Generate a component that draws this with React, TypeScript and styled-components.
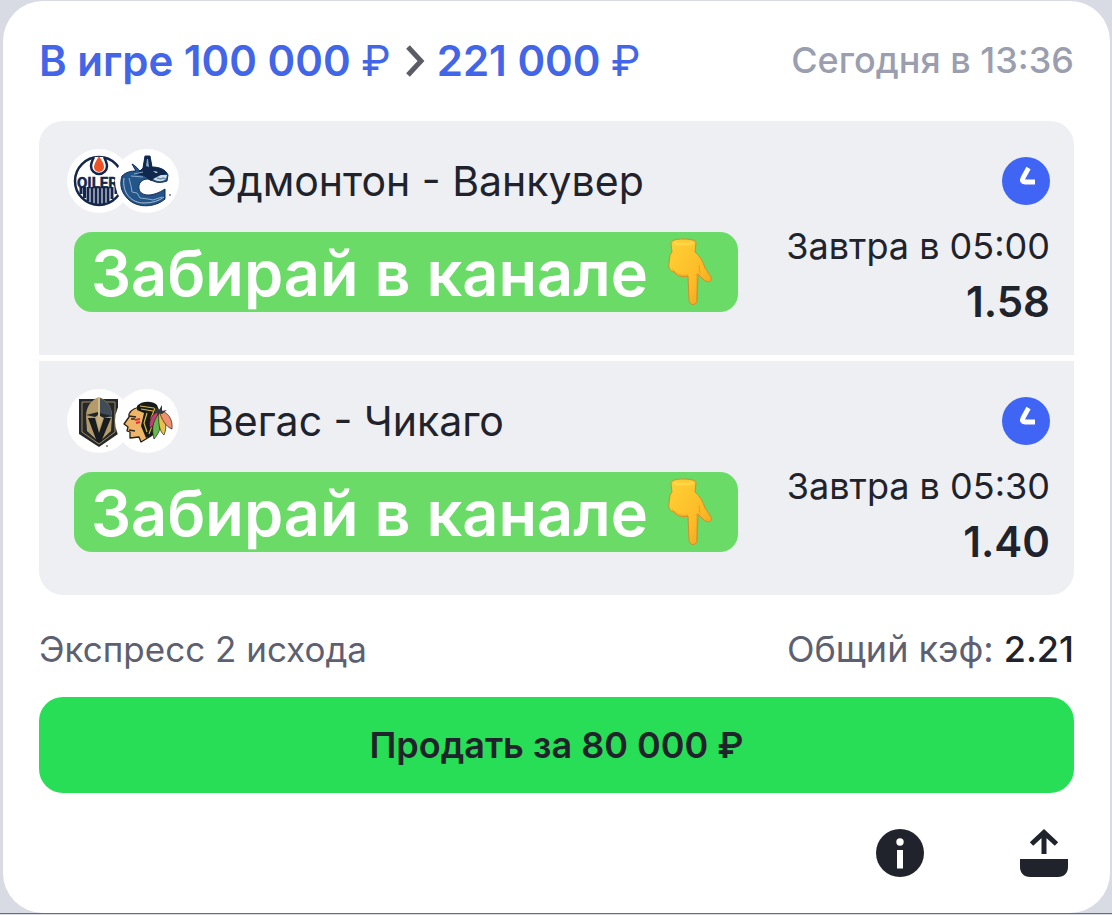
import styled, { createGlobalStyle } from "styled-components";

const GlobalStyle = createGlobalStyle`
  * {
    box-sizing: border-box;
  }

  body {
    margin: 0;
    background: #d8dae4;
    font-family: Inter, "Liberation Sans", sans-serif;
    color: #20232c;
  }

  button {
    font-family: inherit;
    border: none;
    padding: 0;
    cursor: pointer;
  }
`;

const Page = styled.div`
  padding: 1px 2px 0 3px;
  border-bottom: 1px solid #6c6d73;
`;

const Card = styled.main`
  padding: 36px;
  background: #ffffff;
  border-radius: 40px;
`;

const Header = styled.header`
  display: flex;
  justify-content: space-between;
  align-items: center;
  height: 48px;
  margin-bottom: 36px;
`;

const Stake = styled.h1`
  display: flex;
  align-items: center;
  margin: 0;
  font-size: 42px;
  font-weight: 600;
  line-height: 48px;
  color: #4365e8;
`;

const Currency = styled.span`
  font-weight: 400;
`;

const Arrow = styled.svg`
  width: 20px;
  height: 32px;
  margin: 0 12px 0 14px;
`;

const Placed = styled.time`
  font-size: 36px;
  line-height: 44px;
  padding-bottom: 2px;
  font-weight: 500;
  color: #9a9eae;
`;

const Events = styled.section`
  display: flex;
  flex-direction: column;
  gap: 6px;
  overflow: hidden;
  border-radius: 24px;
`;

const Event = styled.article`
  padding: 27px 24px 25px 27px;
  background: #eeeff3;
`;

const EventTop = styled.div`
  display: flex;
  align-items: center;
  height: 66px;
`;

const Logos = styled.div`
  display: flex;
  margin-right: 27px;
`;

const Logo = styled.svg`
  display: block;
  width: 66px;
  height: 66px;

  & + & {
    margin-left: -18px;
  }
`;

const Teams = styled.h2`
  flex: 1;
  margin: 0;
  font-size: 41px;
  font-weight: 400;
  line-height: 48px;
`;

const Clock = styled.svg`
  width: 48px;
  height: 48px;
`;

const EventBody = styled.div`
  display: flex;
  justify-content: space-between;
  align-items: flex-start;
  padding-top: 4px;
`;

const Promo = styled.div`
  display: flex;
  align-items: center;
  gap: 20px;
  height: 80px;
  margin: 14px 0 0 8px;
  padding: 2px 24px 0 17px;
  border-radius: 18px;
  background: #6adb67;
  font-size: 63px;
  font-weight: 600;
  line-height: 76px;
  color: #ffffff;
  white-space: nowrap;
`;

const Hand = styled.svg`
  width: 46px;
  height: 70px;
`;

const Result = styled.div`
  display: flex;
  flex-direction: column;
  align-items: flex-end;
  line-height: 56px;
  white-space: nowrap;
`;

const Start = styled.time`
  font-size: 36px;
`;

const Odds = styled.strong`
  font-size: 42px;
  font-weight: 600;
`;

const Summary = styled.div`
  display: flex;
  justify-content: space-between;
  margin: 30px 0 24px;
  font-size: 36px;
  line-height: 48px;
  color: #5d6070;
`;

const BetType = styled.span`
  font-size: 35px;
`;

const Total = styled.strong`
  font-weight: 500;
  color: #20232c;
`;

const SellButton = styled.button`
  display: block;
  width: 100%;
  height: 96px;
  border-radius: 24px;
  background: #29de57;
  font-size: 36px;
  font-weight: 600;
  color: #20232c;
`;

const Actions = styled.footer`
  display: flex;
  justify-content: flex-end;
  gap: 96px;
  margin-top: 36px;
  padding-right: 6px;
`;

const IconButton = styled.button`
  width: 48px;
  height: 48px;
  background: none;

  svg {
    display: block;
  }
`;

function OilersLogo() {
  return (
    <Logo viewBox="0 0 66 66">
      <circle cx="33" cy="33" r="32" fill="#fff" />
      <circle cx="33" cy="33" r="24" fill="#fff" stroke="#14264b" strokeWidth="2.5" />
      <path
        d="M15 39v7M18.500 39v11M22 39v14M26 39v17M30 39v18M34 39v18M38 39v17M42 39v15M46 39v12M50 39v7"
        stroke="#14264b"
        strokeWidth="3"
      />
      <text x="11" y="40" fontFamily="Roboto" fontWeight="700" fontSize="15" fill="#14264b" stroke="#14264b" strokeWidth=".5">
        OILER
      </text>
      <path
        d="M28 9c-2 4-3 6-3 9a8 8 0 0 0 16 0c0-3-1-5-3-9"
        fill="#fff"
        stroke="#14264b"
        strokeWidth="2.500"
      />
      <path d="M33 8c-3 5-5 8-5 11a5 5 0 0 0 10 0c0-3-2-6-5-11Z" fill="#f05223" />
    </Logo>
  );
}

function CanucksLogo() {
  return (
    <Logo viewBox="0 0 66 66">
      <circle cx="33" cy="33" r="32" fill="#fff" />
      <path
        d="M8 28c4-4 9-5 14-5l-4-7c4 2 6 5 8 7l3-3 2-12h5l2 11c8 0 14 3 16 8l-1 6c-3 1-7 2-11 1l-8-3c-6 0-10 4-9 10 2 8 14 8 26 0v10c-9 8-27 10-37 0-6-6-9-13-6-23Z"
        fill="#24558a"
        stroke="#112b55"
        strokeWidth="1"
        strokeLinejoin="round"
      />
      <path d="M10 30c-2 16 8 25 20 25 8 0 15-2 20-6" fill="none" stroke="#a7c0d4" strokeWidth="1" />
      <path d="m15 30 2 8 1 6 5 1 3 5 8 1 5 1 9-3" fill="none" stroke="#8babc8" strokeWidth="1" />
      <path d="m29 20 2-12h5l2 11c7 0 13 2 15 7l-9 2-7 5-7-5-8-2Z" fill="#10284e" />
      <path d="m32 18 1-7h1l1 8Z" fill="#8babc8" />
      <path d="m39 31 8-4 6 0-1 4c-4 3-8 3-13 0Z" fill="#d3dde4" />
      <path d="m43 30 4 1 2-1 3 1" fill="none" stroke="#6f93b4" strokeWidth="1.500" />
      <path d="m39 23 5 1-2 1Z" fill="#fff" />
      <path d="m20 26 9-2M17 28l12 1" stroke="#8babc8" strokeWidth="1" />
      <circle cx="56" cy="47" r="1" fill="#6e7686" />
    </Logo>
  );
}

function KnightsLogo() {
  return (
    <Logo viewBox="0 0 66 66">
      <circle cx="33" cy="33" r="32" fill="#fff" />
      <path d="M13 11h39v35L33 59 13 46Z" fill="#24282b" />
      <path d="M16 14h33v30L33 56 16 44Z" fill="none" stroke="#a58b5d" strokeWidth="1" />
      <path d="M33 9c-8 3-13 10-13 19l1 15 12 11 12-11 1-15c0-9-5-16-13-19Z" fill="#b49b6b" />
      <path d="M34 10v16l12 3c0-9-4-16-12-19Z" fill="#414c57" />
      <path d="M20 27 32 24v3l-3 2ZM46 28l-12-3v3l4 2Z" fill="#20262a" />
      <path d="M22 30h7l4 15 5-15h7L35 54h-4Z" fill="#181c1f" />
      <path d="m30 30 3 11 4-11-4-2Z" fill="#c7b07e" />
      <path d="M33 9v20" stroke="#decb9f" strokeWidth="1.300" />
      <circle cx="41" cy="58" r="1" fill="#77716a" />
    </Logo>
  );
}

function BlackhawksLogo() {
  return (
    <Logo viewBox="0 0 66 66">
      <circle cx="33" cy="33" r="32" fill="#fff" />
      <path
        d="M25 19c-7 2-11 5-10 10l-5 7 4 3-1 4 3 1v6l9-1 2 5 10-6-4-15 3-12Z"
        fill="#efb568"
        stroke="#252119"
        strokeWidth="1.300"
        strokeLinejoin="round"
      />
      <path d="M23 18c4-5 15-6 20-1l4 10-5 4-2 16-8 3-5-12 3-13-7-3Z" fill="#171b18" />
      <path d="m26 18 14 2M27 21l12 2M41 20l-4 10 1 8-3 8M33 25l-3 10 3 9" fill="none" stroke="#d8b647" strokeWidth="1.200" />
      <path d="m15 28 7 1M17 31h4M15 42l6 1" stroke="#33251b" strokeWidth="1.400" />
      <path d="m21 32 5-1M22 35l4-1" stroke="#df2e38" strokeWidth="2" />
      <path d="M44 24c-6 1-10 10-8 16 6-4 8-8 8-16Z" fill="#c53c73" stroke="#282018" strokeWidth=".7" />
      <path d="M45 25c-6 9-8 15-5 26 7-8 8-15 5-26Z" fill="#65b950" stroke="#282018" strokeWidth=".7" />
      <path d="M45 23c-1 11 0 20 5 24 4-9 1-19-5-24Z" fill="#e8c24d" stroke="#282018" strokeWidth=".7" />
      <path d="M45 22c2 9 7 17 13 19 1-10-4-17-13-19Z" fill="#ef9170" stroke="#282018" strokeWidth=".7" />
      <path d="m41 19 4 3 3-5v6l5-1-5 4-7-1Z" fill="#30383a" />
    </Logo>
  );
}

function PointingDown() {
  return (
    <Hand viewBox="0 0 46 70" role="img" aria-label="👇">
      <defs>
        <linearGradient id="skin" x1="0" y1="0" x2="1" y2="1">
          <stop offset="0" stopColor="#ffd137" />
          <stop offset=".6" stopColor="#fdbc27" />
          <stop offset="1" stopColor="#ed9d21" />
        </linearGradient>
      </defs>
      <path
        d="M3 6c0-4 5-5 12-5s13 1 13 4l-1 9c5 4 8 10 10 16l6 9c2 5-3 6-7 3l-6-6-1 26c0 6-8 6-8 0l-1-24c-7 2-12-1-14-4C2 33 0 30 1 25l1-8 2-3Z"
        fill="url(#skin)"
        stroke="#d58e27"
        strokeWidth="1"
      />
      <path d="M29 35v27M31 27l1 9M4 31c5 6 11 7 16 6" fill="none" stroke="#d88624" strokeWidth="1" opacity=".5" />
      <path d="M6 5c6 2 15 1 20 0" fill="none" stroke="#ffe35e" strokeWidth="3" opacity=".5" />
    </Hand>
  );
}

const events = [
  {
    teams: "Эдмонтон - Ванкувер",
    start: "Завтра в 05:00",
    odds: "1.58",
    logos: [OilersLogo, CanucksLogo],
  },
  {
    teams: "Вегас - Чикаго",
    start: "Завтра в 05:30",
    odds: "1.40",
    logos: [KnightsLogo, BlackhawksLogo],
  },
];

function App() {
  return (
    <>
      <GlobalStyle />
      <Page>
        <Card>
          <Header>
            <Stake>
              <span>
                В игре 100 000 <Currency>₽</Currency>
              </span>
              <Arrow viewBox="0 0 20 32" fill="none" aria-hidden="true">
                <path d="m3 2 13 14L3 30" stroke="#5b5c66" strokeWidth="5" />
              </Arrow>
              <span>
                221 000 <Currency>₽</Currency>
              </span>
            </Stake>
            <Placed>Сегодня в 13:36</Placed>
          </Header>

          <Events>
            {events.map(({ teams, start, odds, logos: [Home, Away] }) => (
              <Event key={teams}>
                <EventTop>
                  <Logos>
                    <Home />
                    <Away />
                  </Logos>
                  <Teams>{teams}</Teams>
                  <Clock viewBox="0 0 48 48" fill="none" aria-hidden="true">
                    <circle cx="24" cy="24" r="24" fill="#4065f5" />
                    <path d="m26.500 11-5.500 10q-2 4 2 4h10" stroke="#fff" strokeWidth="4.800" />
                  </Clock>
                </EventTop>
                <EventBody>
                  <Promo>
                    Забирай в канале
                    <PointingDown />
                  </Promo>
                  <Result>
                    <Start>{start}</Start>
                    <Odds>{odds}</Odds>
                  </Result>
                </EventBody>
              </Event>
            ))}
          </Events>

          <Summary>
            <BetType>Экспресс 2 исхода</BetType>
            <span>
              Общий кэф: <Total>2.21</Total>
            </span>
          </Summary>

          <SellButton type="button">Продать за 80 000 ₽</SellButton>

          <Actions>
            <IconButton type="button" aria-label="Информация">
              <svg viewBox="0 0 48 48" width="48" height="48">
                <circle cx="24" cy="24" r="24" fill="#20232c" />
                <circle cx="24" cy="13" r="3.700" fill="#fff" />
                <path d="M21 21h6v18.500h-6z" fill="#fff" />
              </svg>
            </IconButton>
            <IconButton type="button" aria-label="Поделиться">
              <svg viewBox="0 0 48 48" width="48" height="48" fill="none">
                <path d="M24 25V3M11.500 15 24 3.500 36.500 15" stroke="#20232c" strokeWidth="5" />
                <path d="M0 30h48v8c0 6-4 10-10 10H10C4 48 0 44 0 38Z" fill="#20232c" />
              </svg>
            </IconButton>
          </Actions>
        </Card>
      </Page>
    </>
  );
}

export default App;
